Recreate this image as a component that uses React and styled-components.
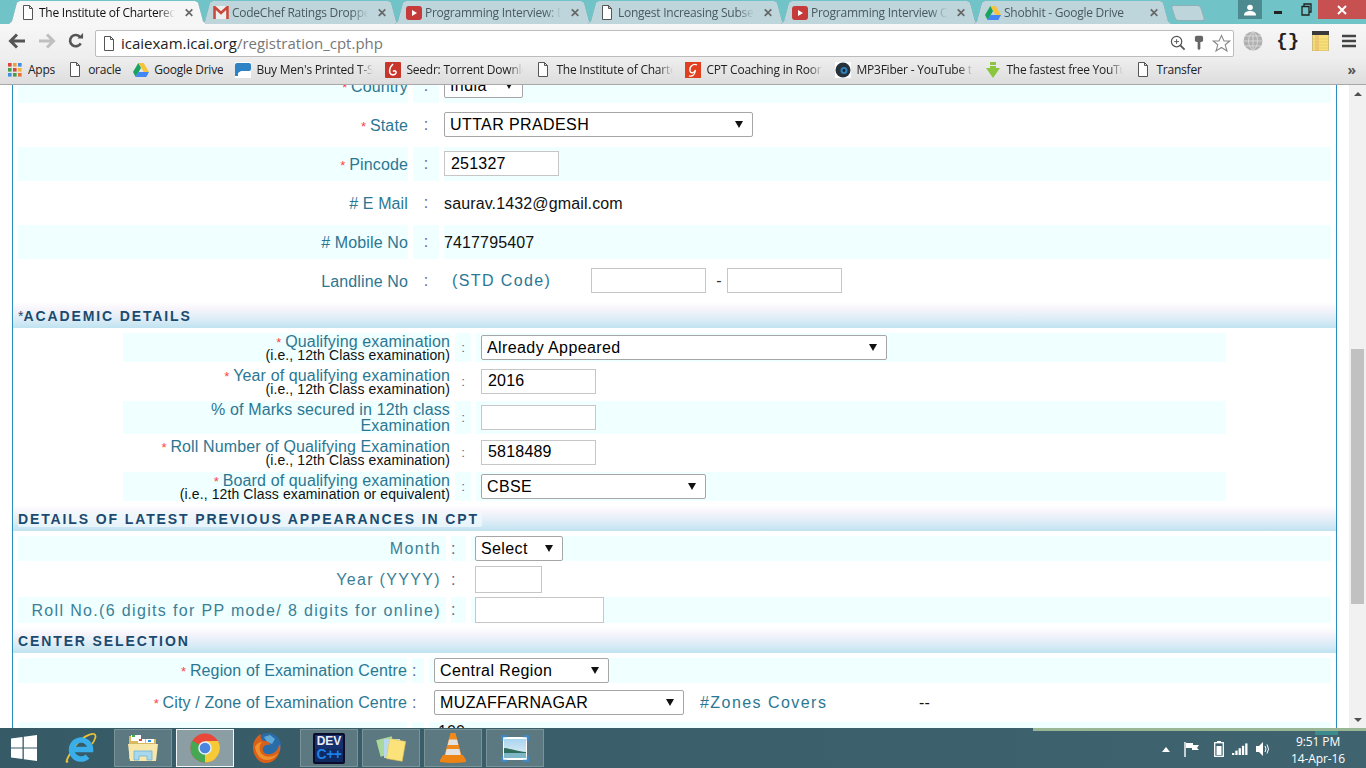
import React from "react";
import styled, { createGlobalStyle } from "styled-components";

const GlobalStyle = createGlobalStyle`
  html, body {
    margin: 0;
    padding: 0;
    width: 1366px;
    height: 768px;
    overflow: hidden;
    background: #fff;
    font-family: "Liberation Sans", Arial, sans-serif;
  }
  * {
    box-sizing: border-box;
  }
`;

const UI_FONT = `"Open Sans", "Noto Sans", sans-serif`;

const Screen = styled.div`
  width: 1366px;
  height: 768px;
  display: flex;
  flex-direction: column;
  overflow: hidden;
`;

/* ---------- browser chrome ---------- */

const TabStrip = styled.div`
  height: 24px;
  background: #70c4c7;
  display: flex;
  padding: 1px 0 0 9px;
`;

const TabOutline = styled.div`
  margin-right: -4px;
  position: relative;
  z-index: ${(p) => (p.$active ? 2 : 1)};
  filter: drop-shadow(0 0 0.6px #5d8a90);
`;

const Tab = styled.div`
  width: 197px;
  height: 23px;
  padding: 0 11px;
  display: flex;
  align-items: center;
  gap: 3px;
  font: 12px ${UI_FONT};
  letter-spacing: -0.25px;
  color: ${(p) => (p.$active ? "#111" : "#4a5a60")};
  background: ${(p) => (p.$active ? "#f6f6f6" : "#bdd5db")};
  clip-path: polygon(0 100%, 3px 88%, 8px 6%, 11px 0, calc(100% - 11px) 0, calc(100% - 8px) 6%, calc(100% - 3px) 88%, 100% 100%);
`;

const IconBox = styled.span`
  width: 16px;
  height: 16px;
  flex: none;
  display: flex;
  align-items: center;
  justify-content: center;
`;

const TabTitle = styled.span`
  width: 136px;
  flex: none;
  white-space: nowrap;
  overflow: hidden;
  -webkit-mask-image: linear-gradient(to right, #000 88%, transparent);
  mask-image: linear-gradient(to right, #000 88%, transparent);
`;

const TabClose = styled.span`
  margin-left: 6px;
  font: bold 12px "Liberation Sans", sans-serif;
  color: #666;
`;

const NewTab = styled.div`
  width: 30px;
  height: 16px;
  margin: 4px 0 0 6px;
  background: #bdd5db;
  border: 1px solid #8fb0b6;
  border-radius: 3px;
  transform: skewX(18deg);
`;

const WindowButtons = styled.div`
  margin: -1px 0 0 auto;
  display: flex;
  height: 19px;
`;

const WinButton = styled.div`
  width: ${(p) => p.$w}px;
  background: ${(p) => p.$bg || "transparent"};
  display: flex;
  align-items: center;
  justify-content: center;
`;

const Toolbar = styled.div`
  height: 33px;
  background: linear-gradient(#f7f7f7, #eeeeee);
  display: flex;
  align-items: center;
  padding: 0 8px;
`;

const NavIcons = styled.div`
  width: 87px;
  display: flex;
  align-items: center;
  gap: 12px;
`;

const Omnibox = styled.div`
  width: 1139px;
  height: 27px;
  margin-top: 5px;
  background: #fff;
  border: 1px solid #bcbcbc;
  border-radius: 2px;
  display: flex;
  align-items: center;
  padding: 0 2px 0 7px;
  font: 15px ${UI_FONT};
`;

const Host = styled.span`
  margin-left: 6px;
  color: #222;
`;

const UrlPath = styled.span`
  color: #777;
`;

const OmniIcons = styled.div`
  margin-left: auto;
  display: flex;
  align-items: center;
  gap: 8px;
`;

const Extensions = styled.div`
  flex: 1;
  margin-left: 9px;
  padding-right: 2px;
  display: flex;
  align-items: center;
  justify-content: space-between;
`;

const Braces = styled.span`
  font: bold 19px "Liberation Mono", monospace;
  color: #222;
  width: 22px;
  text-align: center;
`;

const BookmarkBar = styled.div`
  height: 28px;
  padding: 0 10px 2px 7px;
  background: linear-gradient(#efefef, #dddddd);
  border-bottom: 1px solid #a8a8a8;
  display: flex;
  align-items: center;
  gap: 12px;
  font: 12px ${UI_FONT};
  letter-spacing: -0.22px;
  color: #222;
`;

const Bookmark = styled.div`
  display: flex;
  align-items: center;
  gap: 5px;
  white-space: nowrap;
`;

const BookmarkTitle = styled.span`
  display: block;
  overflow: hidden;
  max-width: 117px;
  ${(p) =>
    p.$fade &&
    `width: 117px;
     -webkit-mask-image: linear-gradient(to right, #000 88%, transparent);
     mask-image: linear-gradient(to right, #000 88%, transparent);`}
`;

const More = styled.span`
  margin-left: auto;
  font-weight: bold;
  font-size: 14px;
  color: #555;
`;

/* ---------- page ---------- */

const Main = styled.div`
  flex: 1;
  min-height: 0;
  display: flex;
  overflow: hidden;
  background: #fff;
`;

const Frame = styled.div`
  flex: 1;
  margin: -16px 12px 0;
  padding: 0 5px;
  border-left: 1px solid #2a8fbc;
  border-right: 1px solid #2a8fbc;
`;

const Row = styled.div`
  display: grid;
  grid-template-columns: ${(p) => p.$cols};
  column-gap: 5px;
  height: ${(p) => p.$h}px;
  margin: 0 ${(p) => p.$inset || 0}px ${(p) => p.$after ?? 5}px;
  font-size: 16px;
  letter-spacing: 0.13px;
  > * {
    background: ${(p) => (p.$alt ? "#f0ffff" : "transparent")};
  }
`;

const Label = styled.div`
  color: ${(p) => (p.$spaced ? "#3a7f97" : "#2b7793")};
  text-align: right;
  display: flex;
  flex-direction: column;
  justify-content: center;
  line-height: 16px;
  letter-spacing: ${(p) => (p.$spaced ? "1.34px" : "inherit")};
  padding-right: ${(p) => p.$pr || 0}px;
  padding-top: ${(p) => p.$pt ?? (p.$spaced ? 0 : 2)}px;
`;

const Star = styled.span`
  color: #f44;
  font-size: 13px;
`;

const SubLabel = styled.span`
  display: block;
  color: #111;
  font-size: 14px;
  line-height: 14px;
  margin-top: -3px;
  letter-spacing: 0.11px;
`;

const Colon = styled.div`
  color: ${(p) => (p.$small ? "#2b7793" : "#667")};
  display: flex;
  align-items: center;
  justify-content: ${(p) => (p.$left ? "flex-start" : "center")};
  font-size: ${(p) => (p.$small ? "13px" : "16px")};
`;

const Value = styled.div`
  display: flex;
  align-items: center;
  padding-left: ${(p) => p.$pl || 0}px;
  padding-bottom: ${(p) => p.$pb || 0}px;
  color: #111;
`;

const PlainValue = styled.span`
  margin-top: 1px;
`;

const Section = styled.div`
  height: 25px;
  margin: 0 -5px 5px;
  padding: 0 0 0 5px;
  background: linear-gradient(#fefdfe 0%, #f6f4fb 25%, #d8ebf6 70%, #bfe3f0 100%);
  display: flex;
  align-items: center;
  font: bold 14px "Liberation Sans", sans-serif;
  letter-spacing: 1.88px;
  color: #1c4a6e;
`;

const SectionPlate = styled.span`
  height: 16px;
  line-height: 16px;
  padding-right: 3px;
  background: rgba(240, 248, 252, 0.75);
  border-radius: 2px;
`;

const PlainAsterisk = styled.span`
  font-weight: normal;
  letter-spacing: 0;
`;

const Dropdown = styled.div`
  position: relative;
  width: ${(p) => p.$w}px;
  height: 25px;
  flex: none;
  &::after {
    content: "";
    position: absolute;
    right: 10px;
    top: 9px;
    border-left: 4px solid transparent;
    border-right: 4px solid transparent;
    border-top: 7px solid #111;
    pointer-events: none;
  }
`;

const NativeSelect = styled.select`
  appearance: none;
  -webkit-appearance: none;
  width: 100%;
  height: 100%;
  padding: 0 0 0 5px;
  background: #fff;
  border: 1px solid #a6a6a6;
  border-radius: 2px;
  font: 16px "Liberation Sans", sans-serif;
  letter-spacing: 0.4px;
  color: #000;
`;

const TextInput = styled.input`
  width: ${(p) => p.$w}px;
  height: ${(p) => p.$h || 25}px;
  flex: none;
  padding: 0 0 0 6px;
  background: #fff;
  border: 1px solid #c6c6c6;
  font: 16px "Liberation Sans", sans-serif;
  letter-spacing: 0.2px;
  color: #000;
`;

const StdCode = styled.span`
  width: 147px;
  padding-left: 8px;
  flex: none;
  color: #2b7793;
  letter-spacing: 1.4px;
`;

const Dash = styled.span`
  width: 21px;
  padding-left: 5px;
  text-align: center;
  color: #333;
`;

const ZoneLabel = styled.span`
  width: 219px;
  margin-left: 16px;
  color: #2b7793;
  letter-spacing: 1.45px;
`;

const Scrollbar = styled.div`
  width: 17px;
  flex: none;
  background: #f1f1f1;
  display: flex;
  flex-direction: column;
  align-items: center;
`;

const ScrollArrow = styled.div`
  margin: ${(p) => (p.$down ? "auto 0 6px" : "7px 0 0")};
  border-left: 4px solid transparent;
  border-right: 4px solid transparent;
  border-${(p) => (p.$down ? "top" : "bottom")}: 4px solid #505050;
`;

const ScrollThumb = styled.div`
  width: 13px;
  height: 255px;
  margin-top: 253px;
  background: #c1c1c1;
`;

/* ---------- taskbar ---------- */

const Taskbar = styled.div`
  position: relative;
  height: 40px;
  flex: none;
  background: linear-gradient(90deg, #365a66, #3f6470);
  display: flex;
  align-items: center;
  gap: 4px;
  &::before {
    content: "";
    position: absolute;
    left: 1033px;
    right: 0;
    top: 0;
    height: 3px;
    background: #9ab795;
  }
  &::after {
    content: "";
    position: absolute;
    left: 1315px;
    width: 23px;
    top: 3px;
    height: 4px;
    background: #3d8a8e;
  }
`;

const Slot = styled.div`
  width: ${(p) => p.$w || 58}px;
  height: 38px;
  flex: none;
  display: flex;
  align-items: center;
  justify-content: center;
  background: ${(p) =>
    p.$active ? "#8a9ea3" : p.$open ? "#5c7880" : "transparent"};
  border: 1px solid ${(p) =>
    p.$active ? "#f2f6f6" : p.$open ? "#7b9299" : "transparent"};
`;

const DevIcon = styled.div`
  width: 32px;
  height: 31px;
  background: linear-gradient(#17306e 50%, #0f2a63 50%);
  border: 2px solid #0c0c28;
  border-radius: 2px;
  display: flex;
  flex-direction: column;
  align-items: center;
  justify-content: center;
  font: bold 12px/13px "Liberation Sans", sans-serif;
  color: #e8edf8;
`;

const DevPlus = styled.span`
  color: #1e82e6;
  font-size: 14px;
  letter-spacing: -0.5px;
`;

const Tray = styled.div`
  margin-left: auto;
  height: 100%;
  display: flex;
  align-items: center;
  position: relative;
`;

const TrayIcon = styled.span`
  display: flex;
  margin-left: ${(p) => p.$ml}px;
  margin-top: 2px;
`;

const Clock = styled.div`
  width: 76px;
  margin-left: 9px;
  margin-right: 10px;
  text-align: center;
  font: 12px/17px ${UI_FONT};
  letter-spacing: -0.1px;
  color: #fff;
  padding-top: 3px;
`;

/* ---------- icons ---------- */

const DocIcon = () => (
  <svg width="12" height="15" viewBox="0 0 12 15">
    <path d="M1.5 .5H7.5L10.5 3.5V14.5H1.5Z M7.5 .5V3.5H10.5" fill="#fff" stroke="#555" />
  </svg>
);

const GmailIcon = () => (
  <svg width="16" height="13" viewBox="0 0 16 13">
    <rect x="0" y="0" width="16" height="13" fill="#eee" />
    <path d="M1.5 13V1L8 7 14.5 1V13" fill="none" stroke="#c8483c" strokeWidth="2.6" />
  </svg>
);

const YoutubeIcon = () => (
  <svg width="16" height="14" viewBox="0 0 16 14">
    <rect width="16" height="14" rx="3" fill="#c73a3a" />
    <path d="M6 4L11 7 6 10Z" fill="#fff" />
  </svg>
);

const DriveIcon = () => (
  <svg width="16" height="14" viewBox="0 0 16 14">
    <path d="M5.3 0H10.7L16 9H10.7Z" fill="#f6c33b" />
    <path d="M5.3 0L0 9 2.7 14 8 5Z" fill="#1aa260" />
    <path d="M2.7 14H13.3L16 9H5.5Z" fill="#4285f4" />
  </svg>
);

const AppsIcon = () => {
  const colors = ["#d9453c", "#e8a33a", "#3f8ee0", "#43a047", "#d9453c", "#f2b632", "#3f8ee0", "#43a047", "#e8703a"];
  return (
    <svg width="14" height="14" viewBox="0 0 14 14">
      {colors.map((c, i) => (
        <rect key={i} x={(i % 3) * 5} y={Math.floor(i / 3) * 5} width="3.6" height="3.6" fill={c} />
      ))}
    </svg>
  );
};

const ChatIcon = () => (
  <svg width="16" height="16" viewBox="0 0 16 16">
    <rect width="16" height="16" fill="#fff" />
    <path d="M2 1H14Q16 1 16 3V7Q16 9 14 9H6L3 11V14H0V3Q0 1 2 1Z" fill="#2f82c4" />
  </svg>
);

const SeedrIcon = () => (
  <svg width="16" height="16" viewBox="0 0 16 16">
    <rect width="16" height="16" rx="1" fill="#c8352b" />
    <path d="M8 2C5 5 4 8 5 11C6 13.5 10 13.5 11 11C11.5 9 9.5 8 8 9.5" fill="none" stroke="#fff" strokeWidth="1.6" />
  </svg>
);

const CptIcon = () => (
  <svg width="16" height="16" viewBox="0 0 16 16">
    <rect width="16" height="16" fill="#e0401f" />
    <path d="M12 3C8 1 4 5 5 9C6 12 9 11 10.5 8C10 12 8 15 4 14" fill="none" stroke="#fff" strokeWidth="1.3" />
  </svg>
);

const Mp3Icon = () => (
  <svg width="16" height="16" viewBox="0 0 16 16">
    <rect width="16" height="16" fill="#fff" />
    <circle cx="8" cy="8" r="7.5" fill="#26323c" />
    <circle cx="9" cy="8.5" r="3.5" fill="#2e7fb8" />
    <circle cx="9" cy="8.5" r="1.4" fill="#10202c" />
  </svg>
);

const ArrowDownIcon = () => (
  <svg width="16" height="16" viewBox="0 0 16 16">
    <path d="M5 0H11V3H5Z M5 4H11V6H15L8 16 1 6H5Z" fill="#8cc63f" />
  </svg>
);

const BackIcon = () => (
  <svg width="18" height="16" viewBox="0 0 18 16">
    <path d="M9 1.5L2.5 8 9 14.5M3 8H17" fill="none" stroke="#555" strokeWidth="3" />
  </svg>
);

const ForwardIcon = () => (
  <svg width="18" height="16" viewBox="0 0 18 16">
    <path d="M9 1.5L15.5 8 9 14.5M15 8H1" fill="none" stroke="#bfbfbf" strokeWidth="3" />
  </svg>
);

const ReloadIcon = () => (
  <svg width="16" height="17" viewBox="0 0 17 17">
    <path d="M13.5 11.5A6 6 0 1 1 13 5" fill="none" stroke="#555" strokeWidth="2.8" />
    <path d="M10 6.5H16V.5Z" fill="#555" />
  </svg>
);

const ZoomIcon = () => (
  <svg width="16" height="16" viewBox="0 0 17 17">
    <circle cx="7" cy="7" r="5.5" fill="#fff" stroke="#555" strokeWidth="1.3" />
    <path d="M4.5 7H9.5M7 4.5V9.5" stroke="#555" />
    <path d="M11 11L15.5 15.5" stroke="#555" strokeWidth="2" />
  </svg>
);

const KeyIcon = () => (
  <svg width="10" height="18" viewBox="0 0 11 18">
    <rect x="1" y="1" width="9" height="7" rx="2" fill="#666" />
    <path d="M4 8H7V15L5.5 17 4 15Z" fill="#666" />
  </svg>
);

const StarIcon = () => (
  <svg width="19" height="19" viewBox="0 0 19 19">
    <path d="M9.5 1.5L12 7H17.8L13.2 10.8 15 17 9.5 13.5 4 17 5.8 10.8 1.2 7H7Z" fill="#fff" stroke="#888" strokeWidth="1.1" />
  </svg>
);

const GlobeIcon = () => (
  <svg width="20" height="20" viewBox="0 0 20 20">
    <circle cx="10" cy="10" r="9.5" fill="#b0b0b0" />
    <path d="M10 .5V19.5M.5 10H19.5M2 5H18M2 15H18M10 .5C4 5 4 15 10 19.5M10 .5C16 5 16 15 10 19.5" fill="none" stroke="#e0e0e0" strokeWidth=".8" />
  </svg>
);

const NotepadIcon = () => (
  <svg width="17" height="20" viewBox="0 0 17 20">
    <rect x=".5" y="2" width="16" height="18" fill="#f7df7a" stroke="#b5a35a" strokeWidth=".6" />
    <rect x="0" y="0" width="17" height="4" fill="#3a3a3a" />
    <path d="M4 4V20M6 4V20" stroke="#e08a70" strokeWidth=".6" />
    <path d="M1 8H16M1 11H16M1 14H16M1 17H16" stroke="#e4c85c" strokeWidth=".6" />
  </svg>
);

const MenuIcon = () => (
  <svg width="14" height="14" viewBox="0 0 14 14">
    <path d="M0 2H14M0 7H14M0 12H14" stroke="#444" strokeWidth="2.6" />
  </svg>
);

const UserIcon = () => (
  <svg width="12" height="12" viewBox="0 0 12 12">
    <circle cx="6" cy="3.5" r="2.8" fill="#fff" />
    <path d="M0 11.5C0 8 3 7 6 7S12 8 12 11.5Z" fill="#fff" />
  </svg>
);

const MinimizeIcon = () => (
  <svg width="10" height="10" viewBox="0 0 10 10">
    <rect x="1" y="6" width="8" height="3" fill="#222" />
  </svg>
);

const RestoreIcon = () => (
  <svg width="11" height="13" viewBox="0 0 11 13">
    <path d="M3 3V1H10V9H8M1 3.5H8V12H1Z" fill="none" stroke="#222" strokeWidth="1.3" />
  </svg>
);

const CloseIcon = () => (
  <svg width="10" height="10" viewBox="0 0 10 10">
    <path d="M1 1L9 9M9 1L1 9" stroke="#fff" strokeWidth="2" />
  </svg>
);

const WindowsIcon = () => (
  <svg width="26" height="26" viewBox="0 0 26 26">
    <path d="M0 3.6L11.5 2V12.4H0ZM12.8 1.8L26 0V12.4H12.8ZM0 13.6H11.5V24L0 22.4ZM12.8 13.6H26V26L12.8 24.2Z" fill="#fff" />
  </svg>
);

const IeIcon = () => (
  <svg width="32" height="32" viewBox="0 0 32 32">
    <path d="M3 29C-1 33 4 22 10 14S25 1 29 2C32 3 30 8 27 12" fill="none" stroke="#e8c13c" strokeWidth="1.8" />
    <path d="M7 17.5H25.5A9.5 9.5 0 1 0 22.5 24.5" fill="none" stroke="#3aaee8" strokeWidth="5.5" />
  </svg>
);

const FolderIcon = () => (
  <svg width="32" height="32" viewBox="0 0 32 32">
    <path d="M2 4H12L14 7H29V27H2Z" fill="#d9b860" />
    <rect x="4" y="3" width="10" height="6" fill="#fff" />
    <rect x="5" y="3" width="3" height="2" fill="#3ab54a" />
    <rect x="11" y="7" width="7" height="4" fill="#fff" />
    <rect x="12" y="7" width="3" height="2" fill="#d9453c" />
    <rect x="19" y="7" width="8" height="4" fill="#fff" />
    <rect x="21" y="8" width="3" height="2" fill="#2a8fe0" />
    <path d="M1 12H31L29 29H3Z" fill="#f8e7ab" />
    <path d="M7 28H12V24H20V28H25V19H7Z" fill="#a8d8ee" stroke="#6fb4d8" strokeWidth=".8" />
  </svg>
);

const ChromeIcon = () => (
  <svg width="30" height="30" viewBox="0 0 30 30">
    <circle cx="15" cy="15" r="14.5" fill="#e8473a" />
    <path d="M15 15L2.4 7.8A14.5 14.5 0 0 0 15 29.5Z" fill="#45a852" />
    <path d="M15 15V29.5A14.5 14.5 0 0 0 28 8H15Z" fill="#f6c936" />
    <circle cx="15" cy="15" r="6.8" fill="#e8eef6" />
    <circle cx="15" cy="15" r="5.3" fill="#4a85e0" />
  </svg>
);

const FirefoxIcon = () => (
  <svg width="32" height="32" viewBox="0 0 32 32">
    <circle cx="17" cy="14" r="13" fill="#2a6ca8" />
    <path d="M13 5L19 3 24 7 21 12 16 10Z" fill="#5fa9d8" />
    <path d="M2 15C2 9 6 4 10 2C9 5 10 8 13 9C17 9 19 11 19 13C14 12 11 15 12 19C14 24 22 23 26 18C27 15 28 14 29 12C31 21 24 31 15 31C7 31 2 23 2 15Z" fill="#d9601a" />
    <path d="M4 15C5 22 9 28 16 28C21 28 25 25 27 21C23 25 15 27 10 21C8 18 8 13 11 10C8 10 5 12 4 15Z" fill="#f0902c" />
  </svg>
);

const NotesIcon = () => (
  <svg width="32" height="32" viewBox="0 0 32 32">
    <rect x="3" y="6" width="16" height="17" transform="rotate(-15 11 14)" fill="#a9d89a" />
    <rect x="9" y="7" width="16" height="19" fill="#b8d8f0" />
    <rect x="13" y="8" width="16" height="20" transform="rotate(10 21 18)" fill="#fbe27a" stroke="#e8c858" strokeWidth=".6" />
  </svg>
);

const VlcIcon = () => (
  <svg width="28" height="32" viewBox="0 0 28 32">
    <path d="M11.5 1H16.5L23 25H5Z" fill="#f08a1c" />
    <path d="M10 7.5H18L19.3 13H8.7ZM7.7 17H20.3L21.8 23H6.2Z" fill="#e2e2e2" />
    <path d="M4 23H24L27 28V30Q14 32 1 30V28Z" fill="#ee8414" />
  </svg>
);

const PhotoIcon = () => (
  <svg width="28" height="27" viewBox="0 0 28 27">
    <defs>
      <linearGradient id="sky" x1="0" y1="0" x2="0" y2="1">
        <stop offset="0" stopColor="#a8d4ef" />
        <stop offset="1" stopColor="#e6f2f4" />
      </linearGradient>
    </defs>
    <rect x="2" y="2" width="24" height="23" fill="#fff" />
    <rect x="3" y="4" width="22" height="19" fill="url(#sky)" />
    <path d="M3 13C8 13 14 16 25 17V19H3Z" fill="#2f6d5c" />
    <rect x="3" y="18" width="22" height="5" fill="#7eb8c8" />
    <path d="M1 6V1H6M22 1H27V6M27 21V26H22M6 26H1V21" fill="none" stroke="#3f88c4" strokeWidth="2.4" />
  </svg>
);

const FlagIcon = () => (
  <svg width="16" height="15" viewBox="0 0 16 15">
    <path d="M1 0V15" stroke="#fff" strokeWidth="1.4" />
    <path d="M2 1H9V3H15L13 6 15 8H8V6H2Z" fill="#fff" />
  </svg>
);

const BatteryIcon = () => (
  <svg width="10" height="16" viewBox="0 0 10 16">
    <rect x="3" y="0" width="4" height="2" fill="#fff" />
    <rect x=".7" y="1.7" width="8.6" height="13.6" fill="none" stroke="#fff" strokeWidth="1.3" />
    <rect x="2.5" y="5" width="5" height="9" fill="#fff" />
  </svg>
);

const SignalIcon = () => (
  <svg width="16" height="12" viewBox="0 0 16 12">
    {[0, 1, 2, 3, 4].map((i) => (
      <rect key={i} x={i * 3.3} y={10 - i * 2.4} width="2.3" height={2 + i * 2.4} fill="#fff" />
    ))}
  </svg>
);

const SpeakerIcon = () => (
  <svg width="15" height="14" viewBox="0 0 15 14">
    <path d="M0 4H3L7 0V14L3 10H0Z" fill="#fff" />
    <path d="M9 4Q11 7 9 10M11 2.5Q14 7 11 11.5" fill="none" stroke="#fff" strokeWidth="1" />
  </svg>
);

const TrayArrow = () => (
  <svg width="8" height="5" viewBox="0 0 8 5">
    <path d="M0 5L4 0 8 5Z" fill="#fff" />
  </svg>
);

/* ---------- data ---------- */

const tabs = [
  { title: "The Institute of Chartered", icon: <DocIcon />, active: true },
  { title: "CodeChef Ratings Droppe", icon: <GmailIcon /> },
  { title: "Programming Interview: D", icon: <YoutubeIcon /> },
  { title: "Longest Increasing Subse", icon: <DocIcon /> },
  { title: "Programming Interview Q", icon: <YoutubeIcon /> },
  { title: "Shobhit - Google Drive", icon: <DriveIcon /> },
];

const bookmarks = [
  { title: "Apps", icon: <AppsIcon /> },
  { title: "oracle", icon: <DocIcon /> },
  { title: "Google Drive", icon: <DriveIcon /> },
  { title: "Buy Men's Printed T-S", icon: <ChatIcon />, fade: true },
  { title: "Seedr: Torrent Downlc", icon: <SeedrIcon />, fade: true },
  { title: "The Institute of Charte", icon: <DocIcon />, fade: true },
  { title: "CPT Coaching in Roor", icon: <CptIcon />, fade: true },
  { title: "MP3Fiber - YouTube t", icon: <Mp3Icon />, fade: true },
  { title: "The fastest free YouTu", icon: <ArrowDownIcon />, fade: true },
  { title: "Transfer", icon: <DocIcon /> },
];

const PERSONAL = "390px 26px 1fr";
const ACADEMIC = "327px 16px 1fr";
const DETAILS = "428px 15px 1fr";
const CENTER = "389px 12px 1fr";

const Select = ({ w, value }) => (
  <Dropdown $w={w}>
    <NativeSelect defaultValue={value}>
      <option>{value}</option>
    </NativeSelect>
  </Dropdown>
);

const Required = () => <Star>* </Star>;

const App = () => {
  return (
    <>
      <GlobalStyle />
      <Screen>
        <TabStrip>
          {tabs.map((t) => (
            <TabOutline key={t.title} $active={t.active}>
              <Tab $active={t.active}>
                <IconBox>{t.icon}</IconBox>
                <TabTitle>{t.title}</TabTitle>
                <TabClose>✕</TabClose>
              </Tab>
            </TabOutline>
          ))}
          <NewTab />
          <WindowButtons>
            <WinButton $w={24} $bg="#4d8a8f">
              <UserIcon />
            </WinButton>
            <WinButton $w={32}>
              <MinimizeIcon />
            </WinButton>
            <WinButton $w={24}>
              <RestoreIcon />
            </WinButton>
            <WinButton $w={48} $bg="#c75050">
              <CloseIcon />
            </WinButton>
          </WindowButtons>
        </TabStrip>

        <Toolbar>
          <NavIcons>
            <BackIcon />
            <ForwardIcon />
            <ReloadIcon />
          </NavIcons>
          <Omnibox>
            <DocIcon />
            <Host>icaiexam.icai.org</Host>
            <UrlPath>/registration_cpt.php</UrlPath>
            <OmniIcons>
              <ZoomIcon />
              <KeyIcon />
              <StarIcon />
            </OmniIcons>
          </Omnibox>
          <Extensions>
            <GlobeIcon />
            <Braces>{"{}"}</Braces>
            <NotepadIcon />
            <MenuIcon />
          </Extensions>
        </Toolbar>

        <BookmarkBar>
          {bookmarks.map((b) => (
            <Bookmark key={b.title}>
              <IconBox>{b.icon}</IconBox>
              <BookmarkTitle $fade={b.fade}>{b.title}</BookmarkTitle>
            </Bookmark>
          ))}
          <More>»</More>
        </BookmarkBar>

        <Main>
          <Frame>
            <Row $cols={PERSONAL} $h={34} $alt>
              <Label><span><Required />Country</span></Label>
              <Colon>:</Colon>
              <Value $pb={1}><Select w={79} value="India" /></Value>
            </Row>
            <Row $cols={PERSONAL} $h={34}>
              <Label><span><Required />State</span></Label>
              <Colon>:</Colon>
              <Value $pb={1}><Select w={309} value="UTTAR PRADESH" /></Value>
            </Row>
            <Row $cols={PERSONAL} $h={34} $alt>
              <Label><span><Required />Pincode</span></Label>
              <Colon>:</Colon>
              <Value $pb={1}><TextInput $w={115} defaultValue="251327" /></Value>
            </Row>
            <Row $cols={PERSONAL} $h={34}>
              <Label># E Mail</Label>
              <Colon>:</Colon>
              <Value><PlainValue>saurav.1432@gmail.com</PlainValue></Value>
            </Row>
            <Row $cols={PERSONAL} $h={34} $alt>
              <Label># Mobile No</Label>
              <Colon>:</Colon>
              <Value><PlainValue>7417795407</PlainValue></Value>
            </Row>
            <Row $cols={PERSONAL} $h={34}>
              <Label>Landline No</Label>
              <Colon>:</Colon>
              <Value $pb={1}>
                <StdCode>(STD Code)</StdCode>
                <TextInput $w={115} />
                <Dash>-</Dash>
                <TextInput $w={115} />
              </Value>
            </Row>

            <Section><PlainAsterisk>*</PlainAsterisk>ACADEMIC DETAILS</Section>

            <Row $cols={ACADEMIC} $h={29} $inset={105} $alt>
              <Label $pt={1}>
                <span><Required />Qualifying examination</span>
                <SubLabel>(i.e., 12th Class examination)</SubLabel>
              </Label>
              <Colon $small>:</Colon>
              <Value $pl={5} $pb={1}><Select w={406} value="Already Appeared" /></Value>
            </Row>
            <Row $cols={ACADEMIC} $h={29} $inset={105}>
              <Label $pt={1}>
                <span><Required />Year of qualifying examination</span>
                <SubLabel>(i.e., 12th Class examination)</SubLabel>
              </Label>
              <Colon $small>:</Colon>
              <Value $pl={5} $pb={1}><TextInput $w={115} defaultValue="2016" /></Value>
            </Row>
            <Row $cols={ACADEMIC} $h={32} $inset={105} $alt>
              <Label $pt={1}>% of Marks secured in 12th class Examination</Label>
              <Colon $small>:</Colon>
              <Value $pl={5} $pb={1}><TextInput $w={115} /></Value>
            </Row>
            <Row $cols={ACADEMIC} $h={29} $inset={105}>
              <Label $pt={1}>
                <span><Required />Roll Number of Qualifying Examination</span>
                <SubLabel>(i.e., 12th Class examination)</SubLabel>
              </Label>
              <Colon $small>:</Colon>
              <Value $pl={5} $pb={1}><TextInput $w={115} defaultValue="5818489" /></Value>
            </Row>
            <Row $cols={ACADEMIC} $h={29} $inset={105} $alt>
              <Label $pt={1}>
                <span><Required />Board of qualifying examination</span>
                <SubLabel>(i.e., 12th Class examination or equivalent)</SubLabel>
              </Label>
              <Colon $small>:</Colon>
              <Value $pl={5} $pb={1}><Select w={225} value="CBSE" /></Value>
            </Row>

            <Section><SectionPlate>DETAILS OF LATEST PREVIOUS APPEARANCES IN CPT</SectionPlate></Section>

            <Row $cols={DETAILS} $h={25} $after={5} $alt>
              <Label $spaced $pr={5}>Month</Label>
              <Colon $left>:</Colon>
              <Value $pl={4}><Select w={88} value="Select" /></Value>
            </Row>
            <Row $cols={DETAILS} $h={27} $after={4}>
              <Label $spaced $pr={5}>Year (YYYY)</Label>
              <Colon $left>:</Colon>
              <Value $pl={4}><TextInput $w={67} $h={27} /></Value>
            </Row>
            <Row $cols={DETAILS} $h={26} $alt>
              <Label $spaced $pr={5} $pt={1}>Roll No.(6 digits for PP mode/ 8 digits for online)</Label>
              <Colon $left>:</Colon>
              <Value $pl={4}><TextInput $w={129} $h={26} /></Value>
            </Row>

            <Section>CENTER SELECTION</Section>

            <Row $cols={CENTER} $h={25} $after={7} $alt>
              <Label><span><Required />Region of Examination Centre</span></Label>
              <Colon $left>:</Colon>
              <Value $pl={5}><Select w={175} value="Central Region" /></Value>
            </Row>
            <Row $cols={CENTER} $h={25} $after={7}>
              <Label><span><Required />City / Zone of Examination Centre</span></Label>
              <Colon $left>:</Colon>
              <Value $pl={5}>
                <Select w={250} value="MUZAFFARNAGAR" />
                <ZoneLabel>#Zones Covers</ZoneLabel>
                <span>--</span>
              </Value>
            </Row>
            <Row $cols={CENTER} $h={20} $alt>
              <Label />
              <Colon />
              <Value $pl={9}>100</Value>
            </Row>
          </Frame>
          <Scrollbar>
            <ScrollArrow />
            <ScrollThumb />
            <ScrollArrow $down />
          </Scrollbar>
        </Main>

        <Taskbar>
          <Slot $w={48}><WindowsIcon /></Slot>
          <Slot><IeIcon /></Slot>
          <Slot $open><FolderIcon /></Slot>
          <Slot $active><ChromeIcon /></Slot>
          <Slot><FirefoxIcon /></Slot>
          <Slot $open><DevIcon>DEV<DevPlus>C++</DevPlus></DevIcon></Slot>
          <Slot $open><NotesIcon /></Slot>
          <Slot $open><VlcIcon /></Slot>
          <Slot $open><PhotoIcon /></Slot>
          <Tray>
            <TrayIcon $ml={0}><TrayArrow /></TrayIcon>
            <TrayIcon $ml={14}><FlagIcon /></TrayIcon>
            <TrayIcon $ml={14}><BatteryIcon /></TrayIcon>
            <TrayIcon $ml={8}><SignalIcon /></TrayIcon>
            <TrayIcon $ml={8}><SpeakerIcon /></TrayIcon>
            <Clock>9:51 PM<br />14-Apr-16</Clock>
          </Tray>
        </Taskbar>
      </Screen>
    </>
  );
};

export default App;
